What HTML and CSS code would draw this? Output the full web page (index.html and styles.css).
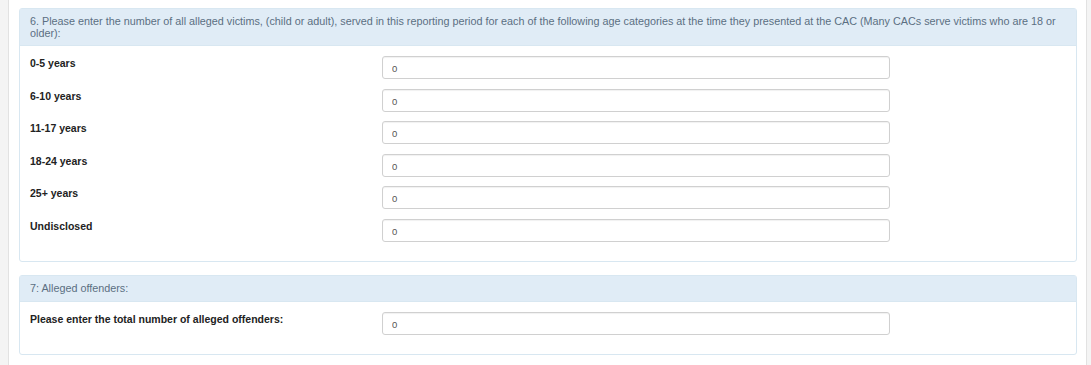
FILE: index.html
```html
<html lang="en">
<head>
    <meta charset="UTF-8">
    <title>CAC Report</title>
    <link rel="stylesheet" href="styles.css">
</head>
<body>
    <div class="page">
        <div class="panel">
            <div class="panel-heading">6. Please enter the number of all alleged victims, (child or adult), served in this reporting period for each of the following age categories at the time they presented at the CAC (Many CACs serve victims who are 18 or older):</div>
            <div class="panel-body">
                <div class="field">
                    <label for="age1">0-5 years</label>
                    <input id="age1" type="text" value="0">
                </div>
                <div class="field">
                    <label for="age2">6-10 years</label>
                    <input id="age2" type="text" value="0">
                </div>
                <div class="field">
                    <label for="age3">11-17 years</label>
                    <input id="age3" type="text" value="0">
                </div>
                <div class="field">
                    <label for="age4">18-24 years</label>
                    <input id="age4" type="text" value="0">
                </div>
                <div class="field">
                    <label for="age5">25+ years</label>
                    <input id="age5" type="text" value="0">
                </div>
                <div class="field">
                    <label for="age6">Undisclosed</label>
                    <input id="age6" type="text" value="0">
                </div>
            </div>
        </div>

        <div class="panel">
            <div class="panel-heading">7: Alleged offenders:</div>
            <div class="panel-body">
                <div class="field">
                    <label for="offenders">Please enter the total number of alleged offenders:</label>
                    <input id="offenders" type="text" value="0">
                </div>
            </div>
        </div>
    </div>
</body>
</html>
```

FILE: styles.css
```css
body{
    margin: 0;
    padding: 0;
    background-color: #f4f4f4;
    font-family: "Liberation Sans", Arial, sans-serif;
}

.page{
    margin: 0 4px 0 8px;
    padding: 8px 9px 10px 10px;
    background-color: #fff;
    border-left: solid 1px #e2e2e2;
    border-right: solid 1px #e2e2e2;
    min-height: 365px;
    box-sizing: border-box;
}

.panel{
    border: solid 1px #d8e7f1;
    border-radius: 3px;
    margin-bottom: 13px;
    background-color: #fff;
}

.panel-heading{
    background-color: #e0ecf6;
    border-bottom: solid 1px #d8e7f1;
    color: #5b6f82;
    font-size: 10.8px;
    line-height: 12px;
    padding: 6px 10px 6px 10px;
    min-height: 13px;
}

.panel-body{
    padding: 10px 10px 20px 10px;
}

.field{
    display: grid;
    grid-template-columns: 352px 508px;
    align-items: start;
    height: 32.6px;
}

.field:last-child{
    height: 22px;
}

label{
    font-size: 10.5px;
    font-weight: bold;
    color: #222;
    padding-top: 1px;
}

input{
    box-sizing: border-box;
    height: 23px;
    width: 508px;
    border: solid 1px #d0d0d0;
    border-radius: 3px;
    padding: 2px 9px 0 9px;
    font-family: "Liberation Sans", Arial, sans-serif;
    font-size: 9.5px;
    color: #555;
    box-shadow: inset 0 1px 1px rgba(0, 0, 0, 0.06);
}
```
